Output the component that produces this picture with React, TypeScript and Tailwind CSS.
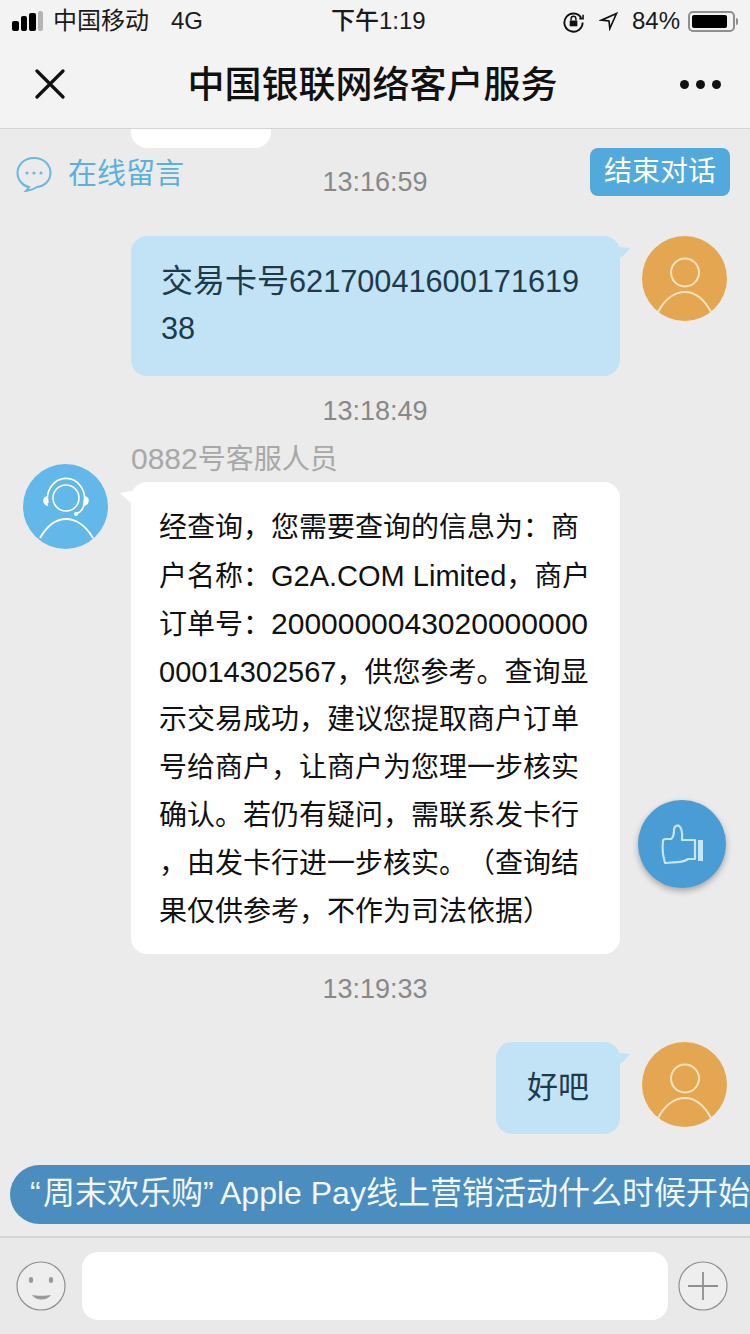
const agentLines = [
  { text: '经查询，您需要查询的信息为：商', latin: '' },
  { text: '户名称：G2A.COM Limited，商户', latin: 'text-[29px]' },
  { text: '订单号：2000000043020000000', latin: 'text-[30px]' },
  { text: '00014302567，供您参考。查询显', latin: 'text-[29px]' },
  { text: '示交易成功，建议您提取商户订单', latin: '' },
  { text: '号给商户，让商户为您理一步核实', latin: '' },
  { text: '确认。若仍有疑问，需联系发卡行', latin: '' },
  { text: '，由发卡行进一步核实。（查询结', latin: '' },
  { text: '果仅供参考，不作为司法依据）', latin: '' },
];

// latin text runs a bit bigger than the CJK around it in the reference
function Mixed({ text, latin }: { text: string; latin: string }) {
  return (
    <>
      {text.split(/([A-Za-z0-9. ]+)/).map((part, i) =>
        i % 2 === 1 ? (
          <span key={i} className={latin}>
            {part}
          </span>
        ) : (
          part
        ),
      )}
    </>
  );
}

function UserAvatar() {
  return (
    <svg viewBox="0 0 85 85" className="w-[85px] h-[85px] shrink-0">
      <circle cx="42.5" cy="42.5" r="42.5" fill="#e5a652" />
      <circle cx="43" cy="36.5" r="14" fill="none" stroke="#f8e3bf" strokeWidth="2" />
      <path d="M16 76 C23 63 33 56 43 56 C53 56 62 63 69 76" fill="none" stroke="#f8e3bf" strokeWidth="2" />
    </svg>
  );
}

function AgentAvatar() {
  return (
    <svg viewBox="0 0 85 85" className="w-[85px] h-[85px] shrink-0">
      <circle cx="42.5" cy="42.5" r="42.5" fill="#63b8ea" />
      <circle cx="43" cy="34" r="13" fill="none" stroke="#fff" strokeWidth="1.6" />
      <path d="M25 39 A18.5 20 0 1 1 61 39 C61 44 58 48 53 50" fill="none" stroke="#fff" strokeWidth="1.6" />
      <path d="M24 33 C20 34 20 39 24 41 Z M62 33 C66 34 66 39 62 41 Z" fill="#fff" stroke="#fff" strokeWidth="1.5" />
      <circle cx="53" cy="50" r="2" fill="#fff" />
      <path d="M17 74 C24 62 33 55 43 55 C53 55 63 62 70 74" fill="none" stroke="#fff" strokeWidth="1.8" />
    </svg>
  );
}

function RightTail() {
  return (
    <svg viewBox="0 0 11 11" className="absolute top-[11px] right-[-10px] w-[11px] h-[11px]">
      <path d="M0 0 L11 1 L3 10 L0 11 Z" fill="#c1e3f5" />
    </svg>
  );
}

function Time({ children }: { children: string }) {
  return <div className="text-center text-[27px] leading-[32px] text-[#888888]">{children}</div>;
}

export default function App() {
  return (
    <div className="relative w-[750px] h-[1334px] overflow-hidden flex flex-col bg-[#ebebeb] font-['Liberation_Sans','Noto_Sans_CJK_SC',sans-serif] [text-spacing-trim:space-all]">
      {/* status bar + title */}
      <div className="h-[129px] shrink-0 bg-[#f3f3f3] border-b border-[#d4d4d4]">
        <div className="h-[42px] flex items-center pl-[12px] pr-[12px] text-[24px] text-[#1a1a1a] relative">
          <div className="flex items-end gap-[2px] w-[33px]">
            <span className="w-[7px] h-[10px] rounded-[2px] bg-black" />
            <span className="w-[6px] h-[15px] rounded-[2px] bg-black" />
            <span className="w-[7px] h-[18px] rounded-[2px] bg-black" />
            <span className="w-[5px] h-[20px] rounded-[2px] bg-[#b5b5b5]" />
          </div>
          <span className="ml-[8px]">中国移动</span>
          <span className="ml-[22px]">4G</span>
          <span className="absolute left-[331px] font-medium">下午1:19</span>
          <div className="ml-auto flex items-center">
            <svg viewBox="0 0 24 24" className="w-[23px] h-[23px]" fill="none" stroke="#111" strokeWidth="2">
              <path d="M20 8 A9.5 9.5 0 1 0 21.5 13" />
              <path d="M18 9 L22 9 L22 5" strokeWidth="1.6" />
              <rect x="8" y="11" width="8" height="6" fill="#111" stroke="none" />
              <path d="M9.5 11 V9 a2.5 2.5 0 0 1 5 0 V11" strokeWidth="1.5" />
            </svg>
            <svg viewBox="0 0 24 24" className="w-[20px] h-[20px] ml-[14px]" fill="none" stroke="#111" strokeWidth="2">
              <path d="M21 3 L3 11 L12 12 L13 21 Z" />
            </svg>
            <span className="ml-[13px]">84%</span>
            <div className="ml-[8px] w-[47px] h-[21px] rounded-[5px] border-2 border-[#8f8f8f] p-[2px]">
              <div className="w-[35px] h-full rounded-[2px] bg-black" />
            </div>
            <span className="ml-[1px] w-[2px] h-[7px] rounded-r bg-[#8f8f8f]" />
          </div>
        </div>
        <div className="h-[84px] flex items-center justify-between pl-[35px] pr-[29px]">
          <svg viewBox="0 0 30 30" className="w-[30px] h-[30px]" stroke="#111" strokeWidth="3.2" strokeLinecap="round">
            <path d="M2 2 L28 28 M28 2 L2 28" />
          </svg>
          <span className="text-[37px] leading-[44px] font-medium text-[#111] translate-y-[2px]">中国银联网络客户服务</span>
          <div className="flex gap-[7px]">
            <span className="w-[9px] h-[9px] rounded-full bg-[#111]" />
            <span className="w-[9px] h-[9px] rounded-full bg-[#111]" />
            <span className="w-[9px] h-[9px] rounded-full bg-[#111]" />
          </div>
        </div>
      </div>

      {/* chat */}
      <div className="flex-1 min-h-0 flex flex-col">
        <div className="ml-[131px] w-[140px] h-[19px] rounded-b-[16px] bg-white" />

        <div className="grid grid-cols-[1fr_auto_1fr] items-start px-[20px]">
          <div className="flex items-center gap-[16px] pt-[6px] -ml-[4px]">
            <svg viewBox="0 0 36 36" className="w-[36px] h-[36px]" fill="none" stroke="#6cb8de" strokeWidth="2">
              <path d="M18 2 C8 2 1.5 9 1.5 17 C1.5 24 7 30 13 31 C12 33 11 34 10 35 C15 34 18 33 21 31 C29 30 34.5 24 34.5 17 C34.5 9 28 2 18 2 Z" />
              <circle cx="11" cy="17" r="1.6" fill="#6cb8de" stroke="none" />
              <circle cx="18" cy="17" r="1.6" fill="#6cb8de" stroke="none" />
              <circle cx="25" cy="17" r="1.6" fill="#6cb8de" stroke="none" />
            </svg>
            <span className="text-[29px] leading-[40px] text-[#5cb0dc]">在线留言</span>
          </div>
          <div className="pt-[18px]">
            <Time>13:16:59</Time>
          </div>
          <div className="flex justify-end">
            <span className="w-[140px] h-[48px] rounded-[8px] bg-[#52a9dc] text-white text-[28px] flex items-center justify-center">结束对话</span>
          </div>
        </div>

        <div className="flex justify-end items-start gap-[22px] pr-[23px] mt-[38px]">
          <div className="relative w-[489px] h-[140px] rounded-[16px] bg-[#c1e3f5] pl-[30px] pt-[22px] text-[32px] leading-[47px] text-[#1d3a4a]">
            <div className="h-[47px]">
              交易卡号<span className="text-[30.7px]">62170041600171619</span>
            </div>
            <div className="h-[47px] text-[30.7px]">38</div>
            <RightTail />
          </div>
          <UserAvatar />
        </div>

        <div className="mt-[19px]">
          <Time>13:18:49</Time>
        </div>

        <div className="flex items-start gap-[23px] pl-[23px] mt-[9px]">
          <div className="pt-[28px]">
            <AgentAvatar />
          </div>
          <div className="w-[489px]">
            <div className="text-[28px] leading-[46px] text-[#a8a8a8] h-[46px]">
              <Mixed text="0882号客服人员" latin="text-[30px]" />
            </div>
            <div className="relative h-[472px] rounded-[16px] bg-white pl-[28px] pt-[22px] text-[28px] leading-[48px] text-[#111] whitespace-nowrap">
              {agentLines.map(line => (
                <div key={line.text} className="h-[48px]">
                  <Mixed text={line.text} latin={line.latin} />
                </div>
              ))}
              <svg viewBox="0 0 12 14" className="absolute top-[8px] left-[-11px] w-[12px] h-[14px]">
                <path d="M12 1 L0 3 L12 14 Z" fill="#fff" />
              </svg>
            </div>
          </div>
        </div>

        <div className="mt-[19px]">
          <Time>13:19:33</Time>
        </div>

        <div className="flex justify-end items-start gap-[22px] pr-[23px] mt-[37px]">
          <div className="relative w-[124px] h-[92px] rounded-[16px] bg-[#c1e3f5] flex items-center justify-center text-[31px] text-[#1d3a4a]">
            好吧
            <RightTail />
          </div>
          <UserAvatar />
        </div>

        <div className="ml-[10px] mt-[31px] w-[900px] h-[59px] rounded-l-[30px] bg-[#4a8dbe] pl-[20px] pb-[4px] flex items-center text-[32px] text-[#f2f7fb] whitespace-nowrap">
          <span className="w-[13px]">“</span>周末欢乐购<span className="w-[17px]">”</span>Apple Pay线上营销活动什么时候开始
        </div>
      </div>

      {/* input bar */}
      <div className="h-[98px] shrink-0 bg-[#e9e9e9] border-t-2 border-[#d6d6d6] flex items-center pl-[16px] pr-[22px] pb-[1px]">
        <svg viewBox="0 0 50 50" className="w-[50px] h-[50px] shrink-0">
          <circle cx="25" cy="25" r="24" fill="#eeeeee" stroke="#8f8f8f" strokeWidth="1.2" />
          <ellipse cx="15" cy="19" rx="2.2" ry="3" fill="#9a9a9a" />
          <ellipse cx="35" cy="19" rx="2.2" ry="3" fill="#9a9a9a" />
          <path d="M16 34 C21 35 30 35 35 34 C31 40 20 40 16 34 Z" fill="#9a9a9a" />
        </svg>
        <div className="ml-[16px] w-[586px] h-[68px] rounded-[16px] bg-white shrink-0" />
        <svg viewBox="0 0 50 50" className="ml-[10px] w-[50px] h-[50px] shrink-0">
          <circle cx="25" cy="25" r="24" fill="#eeeeee" stroke="#8f8f8f" strokeWidth="1.2" />
          <path d="M25 11 V39 M10 25 H40" stroke="#8f8f8f" strokeWidth="1.8" />
        </svg>
      </div>

      {/* floating like button */}
      <div className="absolute left-[638px] top-[800px] w-[88px] h-[88px] rounded-full bg-[#4a9cd4] shadow-[0_3px_6px_rgba(0,0,0,0.3)] flex items-center justify-center">
        <svg viewBox="0 0 44 44" className="w-[44px] h-[44px]" fill="none" stroke="#c6e6f7" strokeWidth="2.2" strokeLinejoin="round">
          <path d="M3 19 Q3 17 6 17 H11 C14 15 14 11 14 8 C14 4 18 2 20 5 C23 8 22 14 22 18 H35 V37 L28 37 C24 40 20 40 5 41 C3 34 2 26 3 19 Z" />
          <rect x="38" y="18" width="5" height="21" fill="#c6e6f7" stroke="none" />
        </svg>
      </div>
    </div>
  );
}
